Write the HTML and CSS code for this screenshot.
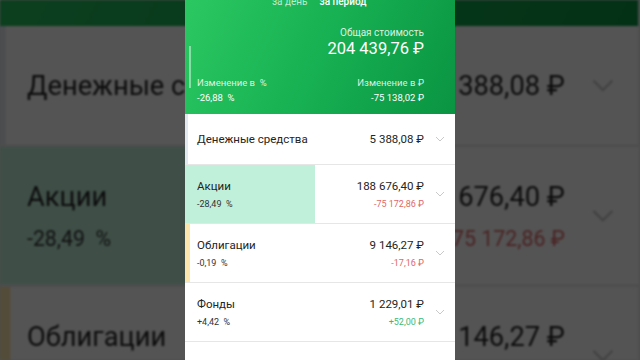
FILE: index.html
```html
<!DOCTYPE html>
<html lang="ru">
<head>
    <meta charset="UTF-8">
    <meta name="viewport" content="width=device-width, initial-scale=1.0">
    <title>Портфель</title>
    <link rel="stylesheet" href="styles.css">
</head>
<body>
    <!-- blurred, zoomed copy of the screen behind the phone frame -->
    <div class="backdrop" aria-hidden="true">
        <div class="screen">
            <div class="summary">
                <div class="tabs">
                    <span class="tab">за день</span>
                    <span class="tab tab-active">за период</span>
                </div>
                <div class="total">
                    <div class="total-label">Общая стоимость</div>
                    <div class="total-value">204 439,76 ₽</div>
                </div>
                <div class="changes">
                    <div>
                        <div class="change-label">Изменение в&nbsp; %</div>
                        <div class="change-value">-26,88&nbsp; %</div>
                    </div>
                    <div class="align-right">
                        <div class="change-label">Изменение в ₽</div>
                        <div class="change-value">-75 138,02 ₽</div>
                    </div>
                </div>
            </div>
            <div class="row row-cash">
                <div class="row-info"><div class="row-name">Денежные средства</div></div>
                <div class="row-amounts"><div class="row-name">5 388,08 ₽</div></div>
                <svg class="chevron" viewBox="0 0 10 6"><path d="M1 1l4 4 4-4"/></svg>
            </div>
            <div class="row row-stocks">
                <div class="row-info">
                    <div class="row-name">Акции</div>
                    <div class="row-sub">-28,49&nbsp; %</div>
                </div>
                <div class="row-amounts">
                    <div class="row-name">188 676,40 ₽</div>
                    <div class="row-sub loss">-75 172,86 ₽</div>
                </div>
                <svg class="chevron" viewBox="0 0 10 6"><path d="M1 1l4 4 4-4"/></svg>
            </div>
            <div class="row row-bonds">
                <div class="row-info">
                    <div class="row-name">Облигации</div>
                    <div class="row-sub">-0,19&nbsp; %</div>
                </div>
                <div class="row-amounts">
                    <div class="row-name">9 146,27 ₽</div>
                    <div class="row-sub loss">-17,16 ₽</div>
                </div>
                <svg class="chevron" viewBox="0 0 10 6"><path d="M1 1l4 4 4-4"/></svg>
            </div>
        </div>
    </div>

    <main class="stage">
        <div class="screen">
            <div class="summary">
                <div class="tabs">
                    <span class="tab">за день</span>
                    <span class="tab tab-active">за период</span>
                </div>
                <div class="total">
                    <div class="total-label">Общая стоимость</div>
                    <div class="total-value">204 439,76 ₽</div>
                </div>
                <div class="changes">
                    <div>
                        <div class="change-label">Изменение в&nbsp; %</div>
                        <div class="change-value">-26,88&nbsp; %</div>
                    </div>
                    <div class="align-right">
                        <div class="change-label">Изменение в ₽</div>
                        <div class="change-value">-75 138,02 ₽</div>
                    </div>
                </div>
            </div>

            <div class="row row-cash">
                <div class="row-info"><div class="row-name">Денежные средства</div></div>
                <div class="row-amounts"><div class="row-name">5 388,08 ₽</div></div>
                <svg class="chevron" viewBox="0 0 10 6"><path d="M1 1l4 4 4-4"/></svg>
            </div>
            <div class="row row-stocks">
                <div class="row-info">
                    <div class="row-name">Акции</div>
                    <div class="row-sub">-28,49&nbsp; %</div>
                </div>
                <div class="row-amounts">
                    <div class="row-name">188 676,40 ₽</div>
                    <div class="row-sub loss">-75 172,86 ₽</div>
                </div>
                <svg class="chevron" viewBox="0 0 10 6"><path d="M1 1l4 4 4-4"/></svg>
            </div>
            <div class="row row-bonds">
                <div class="row-info">
                    <div class="row-name">Облигации</div>
                    <div class="row-sub">-0,19&nbsp; %</div>
                </div>
                <div class="row-amounts">
                    <div class="row-name">9 146,27 ₽</div>
                    <div class="row-sub loss">-17,16 ₽</div>
                </div>
                <svg class="chevron" viewBox="0 0 10 6"><path d="M1 1l4 4 4-4"/></svg>
            </div>
            <div class="row">
                <div class="row-info">
                    <div class="row-name">Фонды</div>
                    <div class="row-sub">+4,42&nbsp; %</div>
                </div>
                <div class="row-amounts">
                    <div class="row-name">1 229,01 ₽</div>
                    <div class="row-sub gain">+52,00 ₽</div>
                </div>
                <svg class="chevron" viewBox="0 0 10 6"><path d="M1 1l4 4 4-4"/></svg>
            </div>
        </div>
    </main>
</body>
</html>
```

FILE: styles.css
```css
* {
    margin: 0;
    padding: 0;
    box-sizing: border-box;
}

body {
    position: relative;
    width: 640px;
    height: 360px;
    overflow: hidden;
    background-color: #4d4d4d;
    font-family: Roboto, "Noto Sans", sans-serif;
    color: #242424;
}

.backdrop {
    position: absolute;
    inset: 0;
    overflow: hidden;
    display: flex;
    justify-content: center;
    filter: brightness(0.33) blur(0.8px);
}

/* fixed point chosen so screen x 0.6 / y 103 lands on the page corner */
.backdrop .screen {
    transform: scale(2.37);
    transform-origin: 136.1px 178.2px;
}

.stage {
    position: relative;
    display: flex;
    justify-content: center;
    height: 360px;
}

.screen {
    flex-shrink: 0;
    width: 270px;
    height: 360px;
    overflow: hidden;
    background-color: #fff;
}

/* green summary card */
.summary {
    position: relative;
    display: flex;
    flex-direction: column;
    height: 114px;
    padding: 0 31px 0 12px;
    background: linear-gradient(115deg, #2bc862 0%, #17b052 50%, #0a9442 100%);
    color: #fff;
}

.summary::before {
    content: "";
    position: absolute;
    left: 4px;
    top: 46px;
    width: 2px;
    height: 42px;
    background-color: rgba(255, 255, 255, 0.45);
}

.tabs {
    display: flex;
    gap: 12px;
    margin-top: -4px;
    padding-left: 75px;
    font-size: 10px;
    line-height: 12px;
}

.tab {
    color: rgba(255, 255, 255, 0.72);
}

.tab-active {
    color: #fff;
    font-weight: 500;
}

.total {
    margin-top: 19px;
    text-align: right;
}

.total-label {
    font-size: 10px;
    line-height: 12px;
    color: rgba(255, 255, 255, 0.85);
}

.total-value {
    font-size: 16.5px;
    line-height: 20px;
}

.changes {
    display: flex;
    justify-content: space-between;
    margin-top: 18px;
    font-size: 9.5px;
    line-height: 12px;
}

.change-label {
    color: rgba(255, 255, 255, 0.85);
}

.change-value {
    margin-top: 3px;
}

.align-right {
    text-align: right;
}

/* asset rows */
.row {
    display: flex;
    align-items: center;
    height: 59px;
    padding: 0 10px 0 12px;
    border-bottom: 1px solid #e6e6e6;
}

.row-cash {
    height: 51px;
    box-shadow: inset 3px 0 0 #e2e8ef;
}

.row-stocks {
    background: linear-gradient(90deg, #c0f0da 0 130px, #fff 130px);
}

.row-bonds {
    box-shadow: inset 5px 0 0 #fce6ae;
}

.row-info {
    flex: 1;
}

.row-amounts {
    text-align: right;
}

.row-name {
    font-size: 11.5px;
    line-height: 16px;
}

.row-sub {
    margin-top: 3px;
    font-size: 9px;
    line-height: 14px;
    color: #333;
}

.loss {
    color: #e0676a;
}

.gain {
    color: #3db979;
}

.chevron {
    width: 10px;
    height: 6px;
    margin-left: 11px;
    fill: none;
    stroke: #c9c9c9;
    stroke-width: 1;
}
```
